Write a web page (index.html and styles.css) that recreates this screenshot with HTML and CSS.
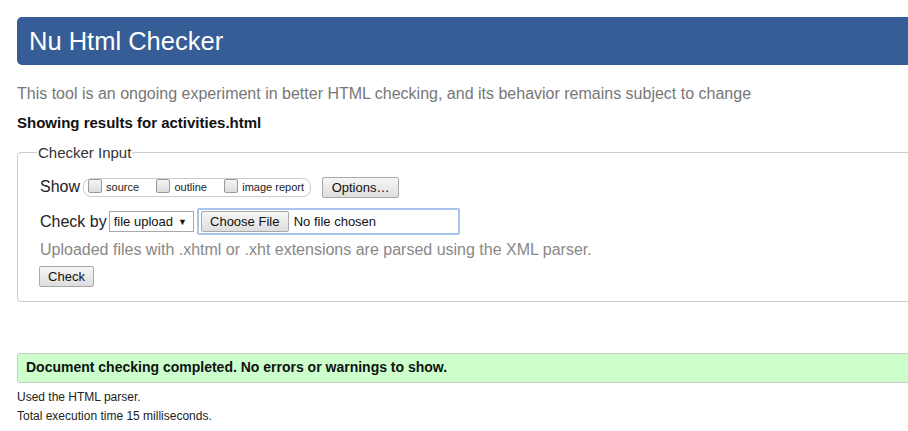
FILE: index.html
```html
<!DOCTYPE html>
<html>
<head>
<meta charset="utf-8">
<title>Nu Html Checker</title>
<link rel="stylesheet" href="styles.css">
</head>
<body>
<div class="page">
  <h1 class="header">Nu Html Checker</h1>
  <p class="intro">This tool is an ongoing experiment in better HTML checking, and its behavior remains subject to change</p>
  <p class="showing">Showing results for activities.html</p>
  <fieldset class="input">
    <legend>Checker Input</legend>
    <div class="row show-row">
      <span class="label">Show</span>
      <span class="pill">
        <span class="opt"><span class="cb"></span><span class="small">source</span></span>
        <span class="opt"><span class="cb"></span><span class="small">outline</span></span>
        <span class="opt"><span class="cb"></span><span class="small">image report</span></span>
      </span>
      <span class="btn options">Options…</span>
    </div>
    <div class="row check-row">
      <span class="label">Check by</span>
      <span class="select">file upload <span class="arrow">▼</span></span>
      <span class="file"><span class="btn choose">Choose File</span><span class="nofile">No file chosen</span></span>
    </div>
    <div class="hint">Uploaded files with .xhtml or .xht extensions are parsed using the XML parser.</div>
    <div class="row"><span class="btn check">Check</span></div>
  </fieldset>
  <div class="success">Document checking completed. No errors or warnings to show.</div>
  <p class="meta">Used the HTML parser.</p>
  <p class="meta">Total execution time 15 milliseconds.</p>
</div>
</body>
</html>
```
FILE: styles.css
```css
html { overflow: hidden; }
body {
  margin: 0;
  font-family: "Liberation Sans", Arial, sans-serif;
  color: #222;
  background: #fff;
}
.page {
  width: 1000px;
  padding: 17px 0 0 17px;
}
.header {
  margin: 0;
  height: 48px;
  background: #365d96;
  color: #fff;
  font-weight: normal;
  font-size: 25.5px;
  line-height: 48px;
  padding-left: 12px;
  border-radius: 5px;
}
.intro {
  margin: 19px 0 0;
  color: #777;
  font-size: 16px;
  line-height: 20px;
}
.showing {
  margin: 9px 0 0;
  font-weight: bold;
  font-size: 15px;
  line-height: 20px;
  color: #111;
}
.input {
  margin: 11px 0 0;
  border: 1px solid #ccc;
  border-radius: 4px;
  padding: 4px 22px 14px;
}
.input legend {
  font-size: 15px;
  color: #333;
  padding: 0 1px;
  margin-left: -3px;
}
.row {
  display: flex;
  align-items: center;
}
.label {
  font-size: 16px;
  color: #222;
  margin-right: 3px;
}
.show-row { height: 24px; margin-top: 10px; }
.pill {
  display: flex;
  align-items: center;
  height: 17px;
  border: 1px solid #ccc;
  border-radius: 8px;
  padding: 0 6px 0 4px;
  width: 216px;
  justify-content: space-between;
}
.opt { display: flex; align-items: center; }
.cb {
  width: 12px;
  height: 12px;
  border: 1px solid #999;
  border-radius: 2px;
  background: linear-gradient(#f4f4f4, #dcdcdc);
  margin-right: 4px;
  margin-top: -3px;
}
.small { font-size: 11px; color: #222; }
.btn {
  display: inline-flex;
  align-items: center;
  justify-content: center;
  border: 1px solid #a9a9a9;
  border-radius: 2px;
  background: linear-gradient(#f6f6f6, #dedede);
  font-size: 13px;
  color: #111;
  box-sizing: border-box;
}
.options { margin-left: 11px; width: 77px; height: 21px; }
.check-row { margin-top: 9px; height: 27px; }
.select {
  display: inline-flex;
  align-items: center;
  box-sizing: border-box;
  width: 85px;
  height: 21px;
  border: 1px solid #a9a9a9;
  font-size: 13px;
  padding-left: 4px;
  color: #111;
  margin-left: -1px;
}
.arrow { font-size: 9px; margin-left: 5px; }
.file {
  display: inline-flex;
  align-items: center;
  box-sizing: border-box;
  margin-left: 3px;
  width: 263px;
  height: 27px;
  border: 2px solid #a8c5f0;
  border-radius: 2px;
  padding-left: 2px;
}
.choose { width: 88px; height: 21px; font-size: 13px; }
.nofile { font-size: 13px; margin-left: 5px; color: #111; }
.hint {
  margin-top: 4px;
  color: #888;
  font-size: 16px;
  line-height: 22px;
}
.check { margin-top: 5px; width: 55px; height: 21px; margin-left: -1px; }
.success {
  margin-top: 51px;
  height: 30px;
  box-sizing: border-box;
  background: #ccffcc;
  border: 1px solid #c6cfc6;
  border-radius: 3px;
  font-weight: bold;
  font-size: 14px;
  line-height: 27px;
  padding-left: 8px;
  color: #111;
}
.meta {
  margin: 8px 0 0;
  font-size: 12px;
  line-height: 13px;
  color: #222;
}
.meta + .meta { margin-top: 6px; }
```
